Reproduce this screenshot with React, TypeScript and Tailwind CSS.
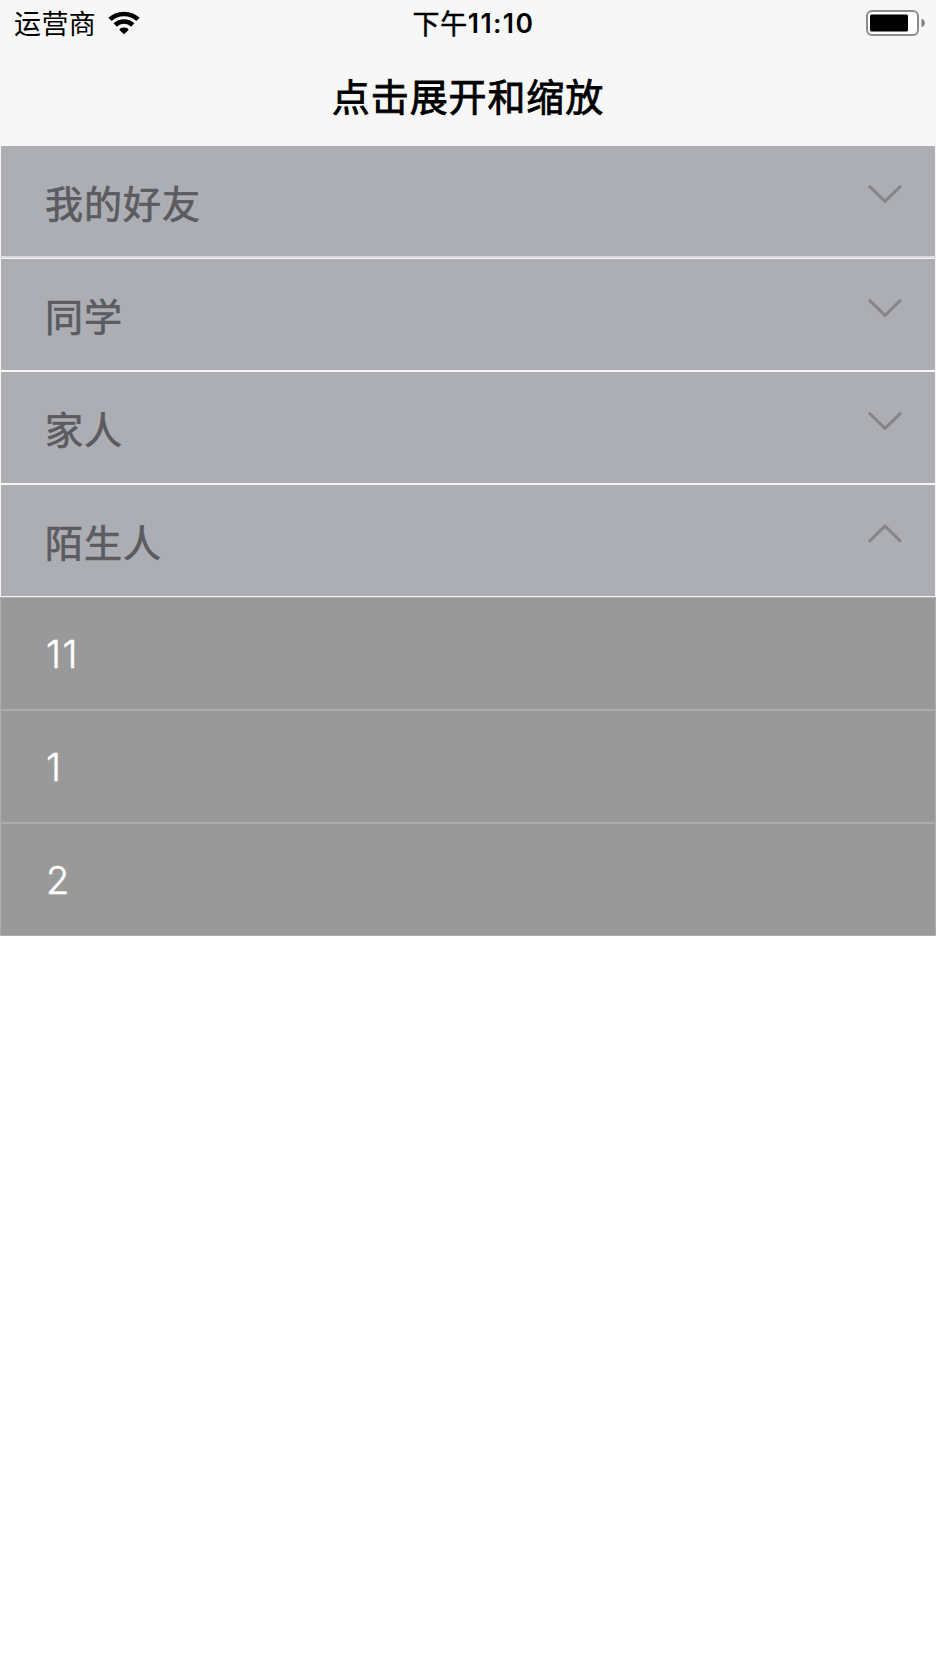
import { useState } from "react";

type Group = { name: string; members: string[] };

const groups: Group[] = [
  { name: "我的好友", members: [] },
  { name: "同学", members: [] },
  { name: "家人", members: [] },
  { name: "陌生人", members: ["11", "1", "2"] },
];

function WifiIcon() {
  return (
    <svg className="ml-[12px] h-[24px] w-[32px]" viewBox="0 0 32 24" fill="none" stroke="#000" strokeWidth="4.6">
      <path d="M2 8.4C9.6 1.1 22.4 1.1 30 8.4" />
      <path d="M7.2 14C12 9.3 20 9.3 24.8 14" />
      <path d="M16 23.2L11.4 18.9C11.6 15.6 20.4 15.6 20.6 18.9Z" fill="#000" stroke="none" />
    </svg>
  );
}

function BatteryIcon() {
  return (
    <svg className="h-[26px] w-[60px]" viewBox="0 0 60 26">
      <rect x="1" y="1" width="51" height="24" rx="5" fill="#fff" stroke="#8c8c8c" strokeWidth="2" />
      <rect x="4" y="4.5" width="38" height="17" rx="1.5" fill="#000" />
      <path d="M55.5 8.7C60 10.2 60 15.8 55.5 17.3Z" fill="#808080" />
    </svg>
  );
}

function Chevron({ open }: { open: boolean }) {
  return (
    <svg className="mb-[14px] h-[20px] w-[36px]" viewBox="0 0 36 20" fill="none" stroke="#868686" strokeWidth="3" strokeLinecap="round" strokeLinejoin="round">
      <path d={open ? "M2.8 16.8L18 2.1L33.2 16.8" : "M2.8 2.7L18 17.4L33.2 2.7"} />
    </svg>
  );
}

export default function App() {
  const [opened, setOpened] = useState<number | null>(3);
  return (
    <div className="min-h-[1664px] w-full bg-white font-['Inter','Noto_Sans_CJK_SC',sans-serif]">
      <header className="h-[145px] bg-[#f7f7f7] text-black">
        <div className="grid h-[46px] grid-cols-3 items-center pr-[10px] pl-[14px]">
          <div className="flex items-center text-[27px] leading-none">
            <span className="pt-[3px] tracking-[0.4px]">运营商</span>
            <WifiIcon />
          </div>
          <div className="flex items-center justify-center pl-[7px] text-[27px] leading-none">
            <span className="pt-[3px] tracking-[0.6px] [-webkit-text-stroke:0.5px_#000]">下午</span>
            <span className="pt-px text-[26.5px] font-semibold tracking-[1.4px]">11:10</span>
          </div>
          <div className="flex justify-end pb-px">
            <BatteryIcon />
          </div>
        </div>
        <h1 className="flex h-[100px] items-center justify-center pt-px text-[38px] leading-none tracking-[0.9px] [-webkit-text-stroke:0.8px_#000]">
          点击展开和缩放
        </h1>
      </header>
      <main>
        {groups.map((group, index) => (
          <section key={group.name} className="group">
            <button
              className="flex h-[113px] w-full items-center justify-between border border-[#f6f6f8] bg-[#adaeb3] pr-[32px] pl-[44px] text-left group-first:border-b-2 group-first:border-b-[#d8d8dd]"
              onClick={() => setOpened(opened === index ? null : index)}
            >
              <span className="pt-[5px] text-[38px] leading-none tracking-[1px] text-[#5b5b60] [-webkit-text-stroke:0.7px_#5b5b60]">
                {group.name}
              </span>
              <Chevron open={opened === index} />
            </button>
            {opened === index &&
              group.members.map((member) => (
                <div
                  key={member}
                  className="flex h-[113px] items-center border border-[#acacb1] bg-[#999999] pt-px pl-[45px] text-[38px] leading-none font-light tracking-[1.5px] text-white [-webkit-text-stroke:0.5px_#fff]"
                >
                  {member}
                </div>
              ))}
          </section>
        ))}
      </main>
    </div>
  );
}
